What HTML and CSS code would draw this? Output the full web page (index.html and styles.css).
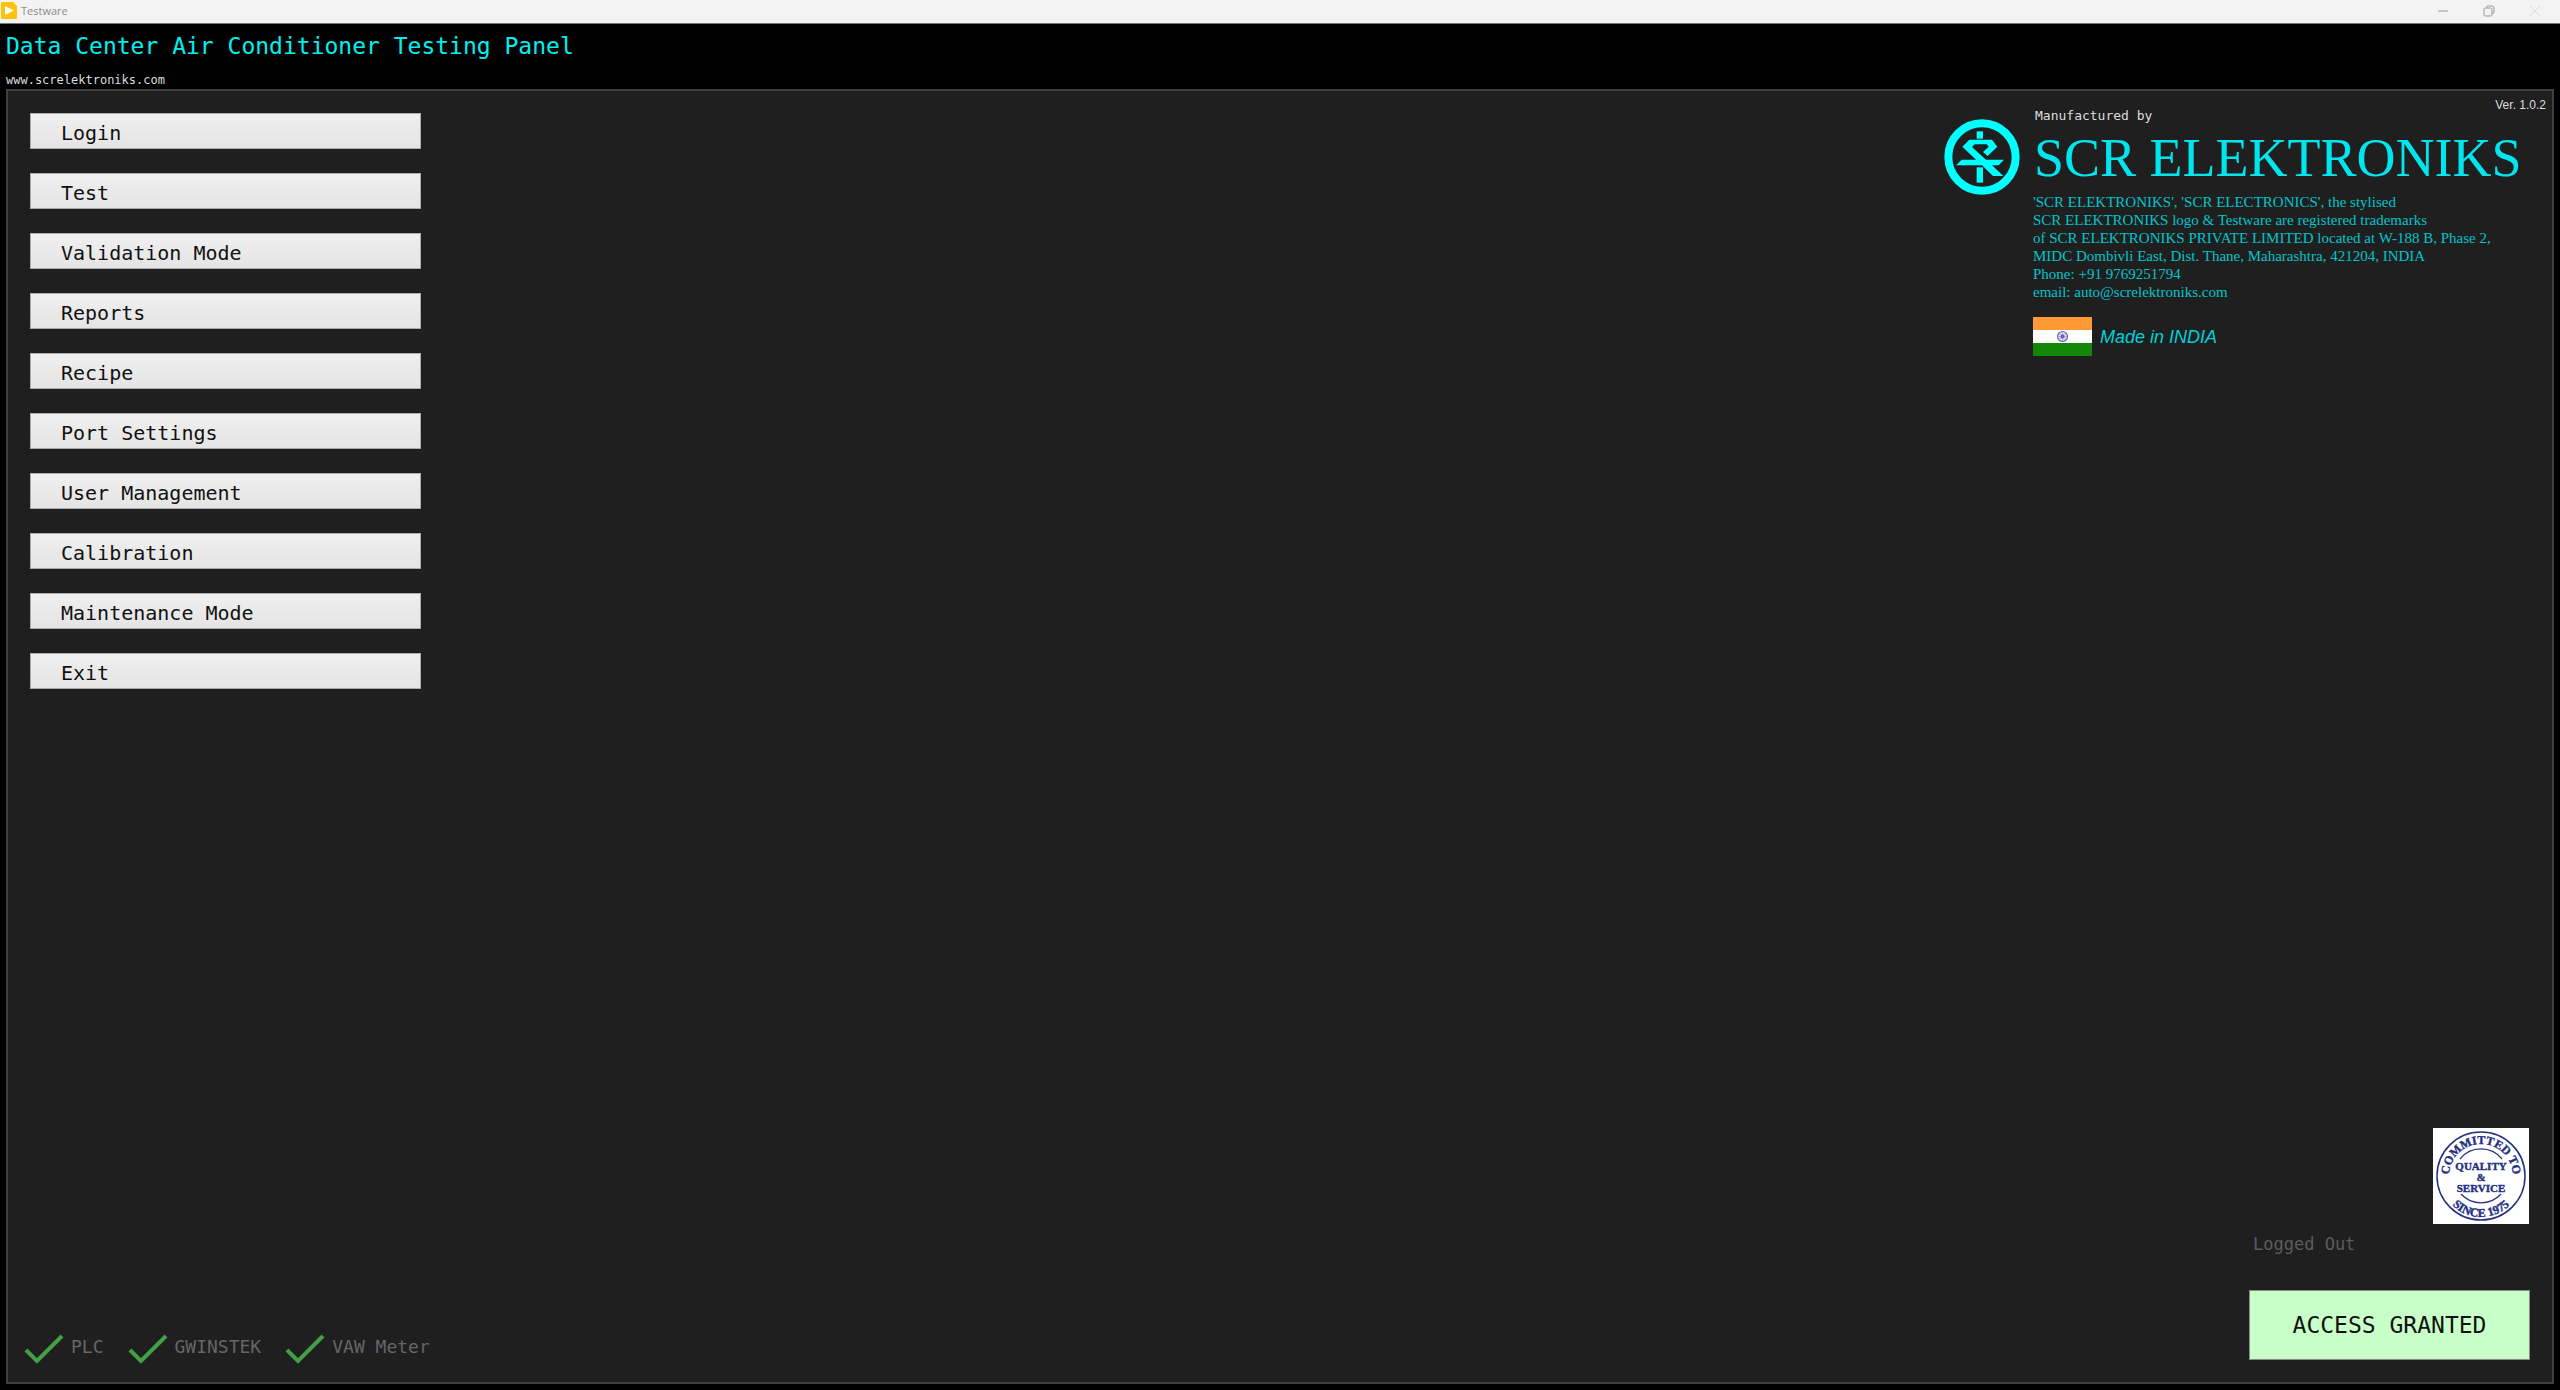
FILE: index.html
```html
<!DOCTYPE html>
<html lang="en">
<head>
    <meta charset="UTF-8">
    <meta name="viewport" content="width=device-width, initial-scale=1.0">
    <title>Testware</title>
    <link rel="stylesheet" href="styles.css">
</head>
<body>
    <div class="titlebar">
        <svg class="app-icon" viewBox="0 0 16 17">
            <path d="M1 0h11l4 4v12a1 1 0 0 1-1 1H1a1 1 0 0 1-1-1V1a1 1 0 0 1 1-1z" fill="#fdc30a"/>
            <path d="M4 4l9 4.500-9 4.500z" fill="#fff"/>
        </svg>
        <span class="app-name">Testware</span>
        <div class="window-buttons">
            <button type="button" aria-label="Minimize">
                <svg viewBox="0 0 12 12"><path d="M1 6h10" stroke="#999"/></svg>
            </button>
            <button type="button" aria-label="Restore">
                <svg viewBox="0 0 12 12" fill="none" stroke="#999"><rect x="1" y="3" width="8" height="8" rx="1.500"/><path d="M3.500 3V2.500A1.500 1.500 0 0 1 5 1h4a2 2 0 0 1 2 2v4a1.500 1.500 0 0 1-2 1.500"/></svg>
            </button>
            <button type="button" aria-label="Close">
                <svg viewBox="0 0 12 12"><path d="M1 1l10 10M11 1L1 11" stroke="#ddd"/></svg>
            </button>
        </div>
    </div>

    <header class="header">
        <h1>Data Center Air Conditioner Testing Panel</h1>
        <a class="site" href="#">www.screlektroniks.com</a>
    </header>

    <main class="panel">
        <div class="top">
            <nav class="menu">
                <button type="button">Login</button>
                <button type="button">Test</button>
                <button type="button">Validation Mode</button>
                <button type="button">Reports</button>
                <button type="button">Recipe</button>
                <button type="button">Port Settings</button>
                <button type="button">User Management</button>
                <button type="button">Calibration</button>
                <button type="button">Maintenance Mode</button>
                <button type="button">Exit</button>
            </nav>

            <section class="brand">
                <svg class="logo" viewBox="44 42 228 228" fill="#00ffff">
                    <circle cx="158" cy="156" r="101" fill="none" stroke="#00ffff" stroke-width="24"/>
                    <path d="M142 79h19v22h-19z"/>
                    <path d="M120 104H188L204 125L175 153L161 141L178 125L172 118H136L128 126L170 164H224L208 181H188L222 213H191L158 181H80L97 164H140L99 125Z"/>
                    <path d="M142 187h19v46h-19z"/>
                </svg>
                <div class="brand-text">
                    <div class="brand-top">
                        <span class="made-by">Manufactured by</span>
                        <span class="version">Ver. 1.0.2</span>
                    </div>
                    <h2>SCR ELEKTRONIKS</h2>
                    <p class="legal">
                        'SCR ELEKTRONIKS', 'SCR ELECTRONICS', the stylised<br>
                        SCR ELEKTRONIKS logo &amp; Testware are registered trademarks<br>
                        of SCR ELEKTRONIKS PRIVATE LIMITED located at W-188 B, Phase 2,<br>
                        MIDC Dombivli East, Dist. Thane, Maharashtra, 421204, INDIA<br>
                        Phone: +91 9769251794<br>
                        email: auto@screlektroniks.com
                    </p>
                    <div class="origin">
                        <svg class="flag" viewBox="0 0 59 39">
                            <path d="M0 0h59v13H0z" fill="#ff9933"/>
                            <path d="M0 13h59v13H0z" fill="#fff"/>
                            <path d="M0 26h59v13H0z" fill="#138808"/>
                            <circle cx="29.500" cy="19.500" r="5" fill="#dcdcf2" stroke="#6a6ab8" stroke-width="1.200"/>
                            <circle cx="29.500" cy="19.500" r="2" fill="#33338f"/>
                            <path d="M29.500 15v9M25 19.500h9M26.500 16.500l6 6M32.500 16.500l-6 6" stroke="#8c8cc8" stroke-width=".5"/>
                        </svg>
                        <em>Made in INDIA</em>
                    </div>
                </div>
            </section>
        </div>

        <div class="bottom">
            <ul class="devices">
                <li>
                    <svg viewBox="0 0 40 32"><path d="M2 17l11 11L38 3"/></svg>
                    PLC
                </li>
                <li>
                    <svg viewBox="0 0 40 32"><path d="M2 17l11 11L38 3"/></svg>
                    GWINSTEK
                </li>
                <li>
                    <svg viewBox="0 0 40 32"><path d="M2 17l11 11L38 3"/></svg>
                    VAW Meter
                </li>
            </ul>

            <div class="access">
                <svg class="stamp" viewBox="0 0 96 96">
                    <defs>
                        <path id="arc-top" d="M16 54V48a32 32 0 0 1 64 0V54"/>
                        <path id="arc-bottom" d="M7 48a41 41 0 0 0 82 0"/>
                    </defs>
                    <path d="M0 0h96v96H0z" fill="#fff"/>
                    <g fill="none" stroke="#25307f">
                        <circle cx="48" cy="48" r="44" stroke-width="1.500"/>
                        <path d="M27 31a27 27 0 0 1 42 0M28 66a27 27 0 0 0 40 0" stroke-width="1.200"/>
                    </g>
                    <g class="stamp-text">
                        <text class="arc"><textPath href="#arc-top" startOffset="50%">COMMITTED TO</textPath></text>
                        <text class="arc"><textPath href="#arc-bottom" startOffset="50%">SINCE 1975</textPath></text>
                        <text x="48" y="42">QUALITY</text>
                        <text x="48" y="53">&amp;</text>
                        <text x="48" y="64">SERVICE</text>
                    </g>
                </svg>
                <span class="user">Logged Out</span>
                <div class="granted" role="status">ACCESS GRANTED</div>
            </div>
        </div>
    </main>
</body>
</html>
```

FILE: styles.css
```css
* {
    box-sizing: border-box;
}
body {
    display: flex;
    flex-direction: column;
    min-height: 100vh;
    margin: 0;
    background-color: #000;
    font-family: "DejaVu Sans Mono", monospace;
}
button {
    font-family: inherit;
    cursor: pointer;
}

/* window title bar */
.titlebar {
    display: flex;
    align-items: center;
    height: 24px;
    padding: 0 2px 2px 1px;
    background-color: #f3f3f3;
    border-bottom: 1px solid #777;
}
.app-icon {
    width: 16px;
    height: 17px;
}
.app-name {
    margin-left: 4px;
    color: #8c8c8c;
    font: 11px "Open Sans", sans-serif;
}
.window-buttons {
    display: flex;
    margin-left: auto;
}
.window-buttons button {
    display: flex;
    justify-content: center;
    width: 46px;
    padding: 0;
    background: none;
    border: none;
}
.window-buttons svg {
    width: 12px;
    height: 12px;
}

.header {
    display: flex;
    flex-direction: column;
    align-items: flex-start;
    padding: 7px 6px 1px;
}
h1 {
    margin: 0 0 12px;
    color: #00f0f0;
    font-size: 23px;
    font-weight: normal;
    line-height: 30px;
}
.site {
    color: #ddd;
    font-size: 12px;
    line-height: 15px;
    text-decoration: none;
}

.panel {
    display: flex;
    flex: 1;
    flex-direction: column;
    justify-content: space-between;
    margin: 0 6px 6px;
    background-color: #1f1f1f;
    border: 2px solid #404040;
}
.top,
.bottom {
    display: flex;
    justify-content: space-between;
}

/* main menu */
.menu {
    display: flex;
    flex-direction: column;
    gap: 24px;
    width: 391px;
    margin: 22px 0 0 22px;
}
.menu button {
    height: 36px;
    padding: 4px 0 0 30px;
    background: linear-gradient(#f0f0f0, #e4e4e4);
    border: 1px solid #aaa;
    color: #111;
    font-size: 20px;
    line-height: 24px;
    text-align: left;
}

/* manufacturer */
.brand {
    display: flex;
    gap: 13px;
    padding: 6px 6px 0 0;
}
.logo {
    width: 76px;
    height: 76px;
    margin-top: 22px;
}
.brand-text {
    width: 513px;
}
.brand-top {
    display: flex;
    align-items: flex-start;
    justify-content: space-between;
}
.made-by {
    padding: 10px 0 0 2px;
    color: #ddd;
    font-size: 13px;
    line-height: 18px;
}
.version {
    color: #ddd;
    font: 12px/16px "Liberation Sans", Arial, sans-serif;
}
h2 {
    margin: 2px 0 4px 1px;
    color: #00e5ee;
    font: 54px/62px "Liberation Serif", serif;
    white-space: nowrap;
}
.legal {
    margin: 0 0 16px;
    color: #00c5cd;
    font: 15px/18px "Liberation Serif", serif;
    white-space: nowrap;
}
.origin {
    display: flex;
    align-items: center;
    gap: 8px;
    color: #00d0d8;
    font: 18px/22px "Liberation Sans", Arial, sans-serif;
}
.flag {
    width: 59px;
    height: 39px;
}

/* device status */
.bottom {
    align-items: flex-end;
    padding: 0 22px 22px 16px;
}
.devices {
    display: flex;
    gap: 24px;
    margin: 0;
    padding: 0;
    color: #666;
    font-size: 18px;
    line-height: 27px;
    list-style: none;
}
.devices li {
    display: flex;
    gap: 7px;
}
.devices svg {
    width: 40px;
    height: 32px;
    margin-bottom: -5px;
    fill: none;
    stroke: #43a047;
    stroke-width: 4;
}

.access {
    display: flex;
    flex-direction: column;
    width: 281px;
}
.stamp {
    align-self: flex-end;
    width: 96px;
    height: 96px;
    margin-right: 1px;
}
.stamp-text {
    fill: #25307f;
    stroke: #25307f;
    stroke-width: .4;
    font: bold 11px "Liberation Serif", serif;
    text-anchor: middle;
}
.arc {
    font-size: 12px;
}
.user {
    margin: 8px 0 34px 4px;
    color: #5c5c5c;
    font-size: 17px;
    line-height: 24px;
}
.granted {
    padding: 19px 0;
    background-color: #c8ffc8;
    border: 1px solid #888;
    color: #111;
    font-size: 23px;
    line-height: 30px;
    text-align: center;
}
```
